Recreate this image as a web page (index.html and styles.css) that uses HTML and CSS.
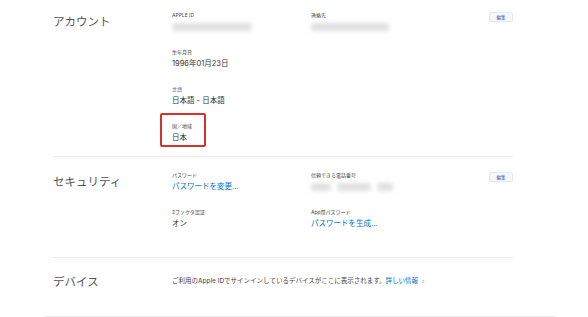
FILE: index.html
```html
<!DOCTYPE html>
<html lang="ja">
<head>
    <meta charset="UTF-8">
    <meta name="viewport" content="width=device-width, initial-scale=1.0">
    <title>Apple ID - アカウント</title>
    <link rel="stylesheet" href="styles.css">
</head>
<body>
    <main class="page">
        <section class="section account">
            <h2 class="section-title">アカウント</h2>
            <div class="fields">
                <div class="field">
                    <div class="label">APPLE ID</div>
                    <div class="value"><span class="blur" style="width: 80px"></span></div>
                </div>
                <div class="field">
                    <div class="label">連絡先</div>
                    <div class="value"><span class="blur" style="width: 78px"></span></div>
                </div>
                <div class="field">
                    <div class="label">生年月日</div>
                    <div class="value">1996年01月23日</div>
                </div>
                <div class="field"></div>
                <div class="field">
                    <div class="label">言語</div>
                    <div class="value">日本語 - 日本語</div>
                </div>
                <div class="field"></div>
                <div class="field highlighted">
                    <div class="label">国／地域</div>
                    <div class="value">日本</div>
                </div>
            </div>
            <button class="edit-btn">編集</button>
        </section>

        <section class="section security">
            <h2 class="section-title">セキュリティ</h2>
            <div class="fields">
                <div class="field">
                    <div class="label">パスワード</div>
                    <div class="value"><a href="#" class="link">パスワードを変更…</a></div>
                </div>
                <div class="field">
                    <div class="label">信頼できる電話番号</div>
                    <div class="value">
                        <span class="blur" style="width: 20px"></span>
                        <span class="blur" style="width: 34px"></span>
                        <span class="blur" style="width: 16px"></span>
                    </div>
                </div>
                <div class="field">
                    <div class="label">2ファクタ認証</div>
                    <div class="value">オン</div>
                </div>
                <div class="field">
                    <div class="label">App用パスワード</div>
                    <div class="value"><a href="#" class="link">パスワードを生成…</a></div>
                </div>
            </div>
            <button class="edit-btn">編集</button>
        </section>

        <section class="section devices">
            <h2 class="section-title">デバイス</h2>
            <p class="note">ご利用のApple IDでサインインしているデバイスがここに表示されます。<a href="#" class="link">詳しい情報</a> <span class="chevron">›</span></p>
        </section>
    </main>
    <div class="footer-line"></div>
</body>
</html>
```

FILE: styles.css
```css
body {
    margin: 0;
    background-color: #fff;
    font-family: "Inter", "Noto Sans CJK JP", sans-serif;
    color: #333;
}
.page {
    width: 460px;
    margin-left: 53px;
}
.section {
    display: flex;
    align-items: flex-start;
    border-bottom: 1px solid #ececec;
}
.account {
    padding: 11px 0 12px;
}
.security {
    padding: 14px 0 27px;
}
.devices {
    border-bottom: none;
    padding: 13px 0 0;
    align-items: center;
}
.section-title {
    width: 119px;
    flex-shrink: 0;
    margin: 2px 0 0;
    font-family: "Noto Sans CJK JP", sans-serif;
    font-size: 11.5px;
    font-weight: 400;
    line-height: 16px;
    color: #555;
}
.fields {
    display: grid;
    grid-template-columns: 139px 139px;
    row-gap: 15px;
}
.field {
    position: relative;
    min-height: 22px;
}
.label {
    font-size: 5px;
    line-height: 8px;
    color: #444;
}
.value {
    margin-top: 2px;
    font-size: 7.5px;
    line-height: 12px;
    color: #333;
    display: flex;
    align-items: center;
    gap: 6px;
    height: 12px;
}
.blur {
    display: inline-block;
    height: 8px;
    background-color: #e0e0e0;
    border-radius: 3px;
    filter: blur(2px);
}
.link {
    color: #0070c9;
    text-decoration: none;
}
.highlighted::after {
    content: "";
    position: absolute;
    top: -9px;
    left: -12px;
    width: 46px;
    height: 34px;
    box-sizing: border-box;
    border: 2px solid #d6312b;
    border-radius: 2px;
}
.edit-btn {
    margin: 1px 0 0 auto;
    width: 24px;
    height: 10px;
    padding: 0;
    border: 1px solid #e6e9ee;
    border-radius: 2px;
    background-color: #f5f7fa;
    color: #3b5a9a;
    font-family: "Noto Sans CJK JP", sans-serif;
    font-size: 4.5px;
    line-height: 8px;
    cursor: pointer;
}
.note {
    margin: 2px 0 0;
    font-size: 6.5px;
    line-height: 12px;
    color: #444;
}
.chevron {
    color: #888;
    margin-left: 2px;
}
.footer-line {
    margin: 27px 0 0 45px;
    width: 510px;
    height: 1px;
    background-color: #ececec;
}
```
